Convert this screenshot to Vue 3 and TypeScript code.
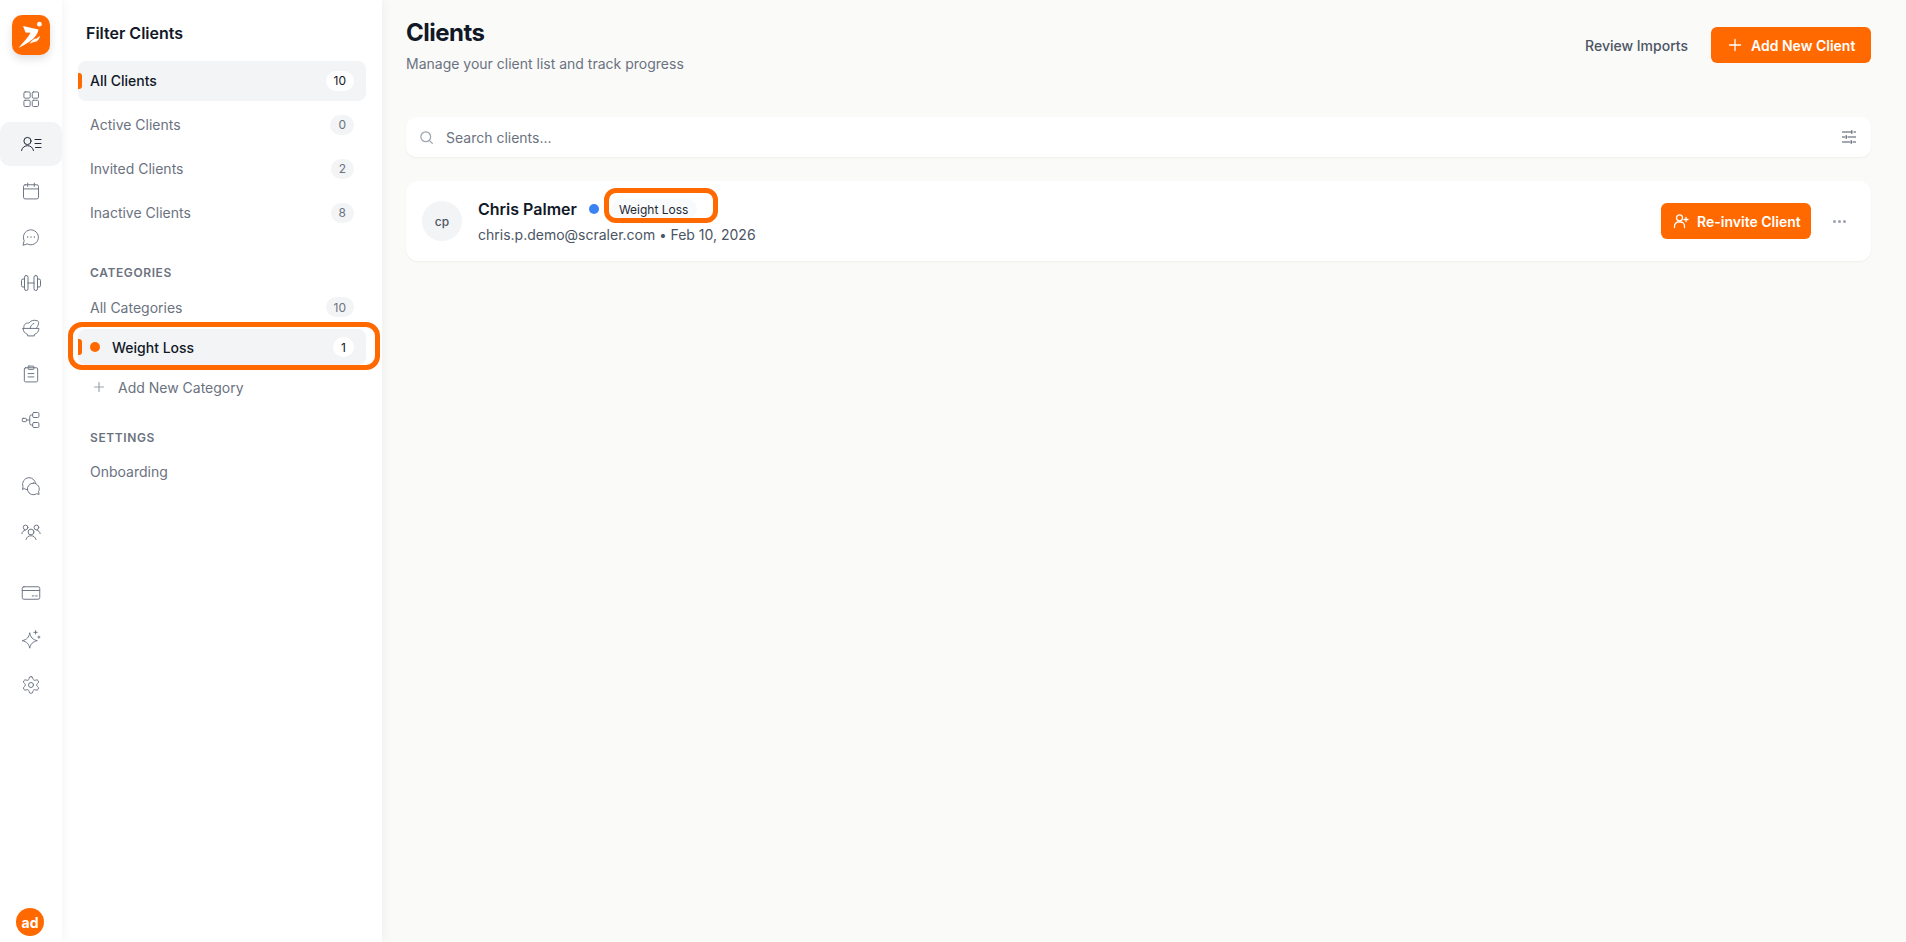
<script setup lang="ts">
interface Row { label: string; count: number; active?: boolean }
const primary: Row[] = [
  { label: 'All Clients', count: 10, active: true },
  { label: 'Active Clients', count: 0 },
  { label: 'Invited Clients', count: 2 },
  { label: 'Inactive Clients', count: 8 },
]
</script>

<template>
  <div class="app">
    <nav class="rail">
      <div class="logo">
        <svg viewBox="0 0 38 40" width="38" height="40">
          <circle cx="27.4" cy="9.2" r="2.4" fill="#fff" />
          <path d="M11 11 L26.500 14.500 C26 18.500 22.500 23.500 17 27 C14 29 10.500 31 6.500 33 C10 28.500 14 24.500 16.500 21 C17.500 19.500 18.300 18.500 18.500 17.800 L13.500 17.500 Z" fill="#fff" />
          <path d="M17.500 29 C19.500 25.500 22 23.600 24.500 23.600 C25.500 22.800 26.500 22 28 20.800 C27.400 24.500 25.200 26.800 22.500 27.100 C20.700 27.300 19 28 17.500 29 Z" fill="#fff" />
        </svg>
      </div>
      <div class="rail-items">
        <a class="ri"><svg viewBox="0 0 24 24"><rect x="3.500" y="3.500" width="7.500" height="7.500" rx="1.500"/><rect x="13.500" y="3.500" width="7.500" height="7.500" rx="1.500"/><rect x="3.500" y="13.500" width="7.500" height="7.500" rx="1.500"/><rect x="13.500" y="13.500" width="7.500" height="7.500" rx="1.500"/></svg></a>
        <a class="ri on"><svg class="w24" viewBox="0 0 24 24"><circle cx="8.500" cy="9" r="3.600"/><path d="M2.500 18.500c.7-3 3-4.800 6-4.800s5.300 1.800 6 4.800"/><path d="M16 7.500h6M16 11.500h6M16.500 15.500h5.500"/></svg></a>
        <a class="ri"><svg viewBox="0 0 24 24"><rect x="3" y="4.500" width="18" height="17" rx="2"/><path d="M3 9.500h18M8 2.500v4M16 2.500v4"/></svg></a>
        <a class="ri"><svg viewBox="0 0 24 24"><path d="M7.900 20.500A9 9 0 1 0 3.800 16.400L2.500 21.500Z"/><path d="M8 12h.01M12 12h.01M16 12h.01" stroke-width="1.700"/></svg></a>
        <a class="ri"><svg class="w24" viewBox="0 0 24 24"><path d="M9 12h6"/><rect x="5.500" y="4.500" width="3.500" height="15" rx="1.700"/><rect x="15" y="4.500" width="3.500" height="15" rx="1.700"/><path d="M5.500 8H4a1.500 1.500 0 0 0-1.500 1.500v5A1.500 1.500 0 0 0 4 16h1.500M18.500 8H20a1.500 1.500 0 0 1 1.500 1.500v5a1.500 1.500 0 0 1-1.500 1.500h-1.500"/></svg></a>
        <a class="ri"><svg viewBox="0 0 24 24"><path d="M2.500 12.500h19a9.500 8 0 0 1-5.500 7.300V21.500H8v-1.700a9.500 8 0 0 1-5.500-7.300z"/><path d="M3.500 12.500C2.500 8.500 5.500 5.500 9.500 6c2-3 6-3.800 8.500-3 3 0 3.500 2 3 4-.4 2-1.500 4-3 5.500"/><path d="M11 12.500c0-2.500 1.500-4.500 4.500-6"/></svg></a>
        <a class="ri"><svg viewBox="0 0 24 24"><rect x="4" y="4.500" width="16" height="17" rx="1.500"/><rect x="8.500" y="2.500" width="7" height="4" rx="1"/><path d="M8.500 11.500h7M8.500 15.500h7"/></svg></a>
        <a class="ri"><svg viewBox="0 0 24 24"><rect x="1.500" y="10" width="5" height="4" rx="1"/><rect x="14" y="3" width="7.500" height="6" rx="1.500"/><rect x="14" y="15" width="7.500" height="6" rx="1.500"/><path d="M6.500 12h4M14 6h-1.500a2 2 0 0 0-2 2v8a2 2 0 0 0 2 2H14"/></svg></a>
        <a class="ri gap-a"><svg viewBox="0 0 24 24"><path d="M8 16.500A8 8 0 0 1 3.700 15L1.800 16.300l.6-3.400A8 8 0 0 1 9.500 2a8 8 0 0 1 8 6.800"/><path d="M15 8.500a7 7 0 0 1 6 10.500l.8 3-3.200-.7A7 7 0 1 1 15 8.500z"/></svg></a>
        <a class="ri"><svg viewBox="0 0 24 24"><circle cx="12" cy="12" r="3.500"/><path d="M6 21c.6-2.800 3-4.500 6-4.500s5.400 1.700 6 4.500"/><circle cx="5.500" cy="6.500" r="2.800"/><circle cx="18.500" cy="6.500" r="2.800"/><path d="M1 14c.3-2.300 2-3.800 4-4M23 14c-.3-2.300-2-3.800-4-4"/></svg></a>
        <a class="ri gap-b"><svg viewBox="0 0 24 24"><rect x="1.500" y="4.500" width="21" height="15" rx="2"/><path d="M1.500 9h21M13.500 15.500h2M17.500 15.500h2"/></svg></a>
        <a class="ri"><svg viewBox="0 0 24 24"><path d="M10.500 5c1 5 3.500 7.800 9 9-5.500 1.200-8 4-9 9-1-5-3.500-7.800-9-9 5.500-1.200 8-4 9-9z"/><path d="M17.500 2v4M15.500 4h4M21.500 8.500v2.500M20.300 9.700h2.400"/></svg></a>
        <a class="ri"><svg viewBox="0 0 24 24"><circle cx="12" cy="12" r="3"/><path d="M12.220 2h-.44a2 2 0 0 0-2 2v.18a2 2 0 0 1-1 1.730l-.43.250a2 2 0 0 1-2 0l-.15-.08a2 2 0 0 0-2.730.730l-.22.380a2 2 0 0 0 .73 2.730l.15.100a2 2 0 0 1 1 1.720v.510a2 2 0 0 1-1 1.740l-.15.090a2 2 0 0 0-.73 2.730l.22.380a2 2 0 0 0 2.730.730l.15-.08a2 2 0 0 1 2 0l.43.250a2 2 0 0 1 1 1.730V20a2 2 0 0 0 2 2h.44a2 2 0 0 0 2-2v-.18a2 2 0 0 1 1-1.730l.43-.25a2 2 0 0 1 2 0l.15.080a2 2 0 0 0 2.730-.730l.22-.39a2 2 0 0 0-.73-2.730l-.15-.08a2 2 0 0 1-1-1.740v-.5a2 2 0 0 1 1-1.740l.15-.09a2 2 0 0 0 .73-2.730l-.22-.38a2 2 0 0 0-2.730-.73l-.15.080a2 2 0 0 1-2 0l-.43-.25a2 2 0 0 1-1-1.730V4a2 2 0 0 0-2-2z"/></svg></a>
      </div>
      <div class="avatar-sm">ad</div>
    </nav>

    <aside class="side">
      <h2 class="side-title">Filter Clients</h2>
      <ul class="list primary">
        <li v-for="r in primary" :key="r.label" class="row" :class="{ sel: r.active }">
          <span class="row-label">{{ r.label }}</span>
          <span class="count">{{ r.count }}</span>
        </li>
      </ul>

      <h3 class="section cat">CATEGORIES</h3>
      <ul class="list cats">
        <li class="row short"><span class="row-label">All Categories</span><span class="count">10</span></li>
        <li class="row short sel ringed">
          <i class="dot"></i><span class="row-label">Weight Loss</span><span class="count">1</span>
        </li>
        <li class="row short add">
          <svg class="plus" viewBox="0 0 16 16"><path d="M8 3.500v9M3.500 8h9" /></svg>
          <span class="row-label">Add New Category</span>
        </li>
      </ul>

      <h3 class="section set">SETTINGS</h3>
      <ul class="list">
        <li class="row short"><span class="row-label">Onboarding</span></li>
      </ul>
    </aside>

    <main class="main">
      <header class="head">
        <div>
          <h1>Clients</h1>
          <p>Manage your client list and track progress</p>
        </div>
        <div class="head-actions">
          <button class="link">Review Imports</button>
          <button class="btn add-btn">
            <svg viewBox="0 0 16 16" width="16" height="16"><path d="M8 2.500v11M2.500 8h11" /></svg>
            Add New Client
          </button>
        </div>
      </header>

      <div class="search">
        <svg class="s-ico" viewBox="0 0 16 16"><circle cx="7.200" cy="7.200" r="5.200"/><path d="M11 11l3.200 3.200"/></svg>
        <span class="placeholder">Search clients...</span>
        <svg class="s-filter" viewBox="0 0 16 16"><path d="M1 3h9M12.500 3H15M1 8h3M6.500 8H15M1 13h8M11.500 13H15M10.800 1.200v3.600M5.200 6.200v3.600M10.200 11.200v3.600"/></svg>
      </div>

      <section class="card">
        <div class="avatar">cp</div>
        <div class="info">
          <div class="name-line">
            <span class="name">Chris Palmer</span>
            <i class="status"></i>
            <span class="tag">Weight Loss</span>
          </div>
          <div class="meta">chris.p.demo@scraler.com <span class="sep">•</span> Feb 10, 2026</div>
        </div>
        <button class="btn invite">
          <svg viewBox="0 0 16 16" width="16" height="16"><circle cx="6.500" cy="4.800" r="3"/><path d="M1.500 14.500v-1.500a4 4 0 0 1 4-4h2a4 4 0 0 1 4 4v1.500M13 4.500v4M11 6.500h4"/></svg>
          Re-invite Client
        </button>
        <span class="more"><i></i><i></i><i></i></span>
      </section>
    </main>
  </div>
</template>

<style>
html, body { margin: 0; background: #fafaf9; }
</style>

<style scoped>
* { box-sizing: border-box; }
.app {
  display: flex;
  height: 942px;
  overflow: hidden;
  font-family: Inter, "Liberation Sans", sans-serif;
  background: #fafaf9;
  color: #111827;
}
.rail {
  width: 62px;
  flex: none;
  background: #fff;
  display: flex;
  flex-direction: column;
  align-items: center;
  padding-top: 15px;
  position: relative;
  z-index: 1;
  box-shadow: 0 0 12px rgba(0, 0, 0, .06);
}
.logo {
  width: 38px;
  height: 40px;
  border-radius: 10px;
  background: #ff6900;
  display: flex;
  align-items: center;
  justify-content: center;
  box-shadow: 0 4px 8px rgba(0, 0, 0, .12);
}
.rail-items {
  display: flex;
  flex-direction: column;
  width: 100%;
  margin-top: 21px;
}
.ri {
  height: 45.900px;
  width: 100%;
  flex: none;
  display: flex;
  align-items: center;
  justify-content: center;
  color: #6b7280;
}
.ri.on {
  height: 44px;
  margin: 0 0 1.900px;
  background: #f3f4f6;
  border-radius: 10px;
  color: #1f2937;
}
.ri svg {
  width: 20px;
  height: 20px;
  fill: none;
  stroke: currentColor;
  stroke-width: 1.150;
  stroke-linecap: round;
  stroke-linejoin: round;
}
.ri svg.w24 { width: 24px; height: 24px; stroke-width: 1; }
.gap-a { margin-top: 20px; }
.gap-b { margin-top: 15px; }
.avatar-sm {
  position: absolute;
  left: 16px;
  top: 908px;
  width: 28px;
  height: 28px;
  border-radius: 50%;
  background: #ff6900;
  color: #fff;
  font-size: 14px;
  font-weight: 700;
  display: flex;
  align-items: center;
  justify-content: center;
}
.side {
  width: 320px;
  flex: none;
  background: #fff;
  padding: 0 16px;
  box-shadow: 0 0 12px rgba(0, 0, 0, .06);
}
.side-title {
  margin: 0;
  padding: 23px 8px 0;
  font-size: 16px;
  line-height: 20px;
  font-weight: 600;
  color: #111827;
}
.list { list-style: none; margin: 0; padding: 0; }
.primary {
  margin-top: 17.500px;
  display: flex;
  flex-direction: column;
  gap: 4px;
}
.row {
  height: 40px;
  border-radius: 8px;
  display: flex;
  align-items: center;
  padding: 0 12px;
  position: relative;
  font-size: 14px;
  color: #6b7280;
}
.row-label { flex: 1; }
.row.sel {
  background: #f3f4f6;
  color: #111827;
  font-weight: 500;
}
.row.sel::before {
  content: "";
  position: absolute;
  left: 0;
  top: 12px;
  width: 4px;
  height: 16px;
  background: #ff6900;
  border-radius: 0 3px 3px 0;
}
.count {
  min-width: 20px;
  height: 20px;
  padding: 0 8px;
  border-radius: 10px;
  background: #f3f4f6;
  color: #6b7280;
  font-size: 12px;
  font-weight: 400;
  display: flex;
  align-items: center;
  justify-content: center;
}
.sel .count { background: #fff; color: #111827; }
.section {
  margin: 0;
  padding: 0 12px;
  font-size: 12px;
  line-height: 16px;
  letter-spacing: .6px;
  font-weight: 600;
  color: #6b7280;
}
.cat { margin-top: 32.500px; }
.set { margin-top: 24.500px; }
.cats { margin-top: 3px; display: flex; flex-direction: column; gap: 4px; }
.row.short { height: 36px; }
.row.short.sel::before { top: 10px; }
.ringed::after {
  content: "";
  position: absolute;
  left: -10px;
  right: -14px;
  top: -7px;
  bottom: -5px;
  border: 5px solid #ff6900;
  border-radius: 14px;
  pointer-events: none;
}
.dot {
  width: 10px;
  height: 10px;
  border-radius: 50%;
  background: #ff6900;
  margin-right: 12px;
}
.add { padding-left: 13px; }
.plus {
  width: 16px;
  height: 16px;
  margin-right: 11px;
  fill: none;
  stroke: #9ca3af;
  stroke-width: 1.200;
  stroke-linecap: round;
}
.list + .section { margin-bottom: 8px; }
.main {
  flex: 1;
  min-width: 0;
  padding: 0 35px 0 24px;
}
.head {
  display: flex;
  justify-content: space-between;
  align-items: flex-start;
  padding-top: 18px;
}
h1 {
  margin: 0;
  font-size: 24px;
  line-height: 30px;
  font-weight: 700;
  letter-spacing: -.5px;
  color: #111827;
}
.head p {
  margin: 6px 0 0;
  font-size: 14px;
  line-height: 20px;
  color: #6b7280;
}
.head-actions {
  display: flex;
  align-items: center;
  gap: 23px;
  margin-top: 9px;
}
button { font-family: inherit; border: 0; cursor: pointer; white-space: nowrap; }
.link {
  background: none;
  padding: 0;
  font-size: 14px;
  font-weight: 500;
  color: #4b5563;
}
.btn {
  background: #ff6900;
  color: #fff;
  font-size: 14px;
  font-weight: 600;
  height: 36px;
  border-radius: 6px;
  display: flex;
  align-items: center;
  gap: 8px;
}
.btn svg { flex: none; fill: none; stroke: #fff; stroke-width: 1.300; stroke-linecap: round; stroke-linejoin: round; }
.add-btn { width: 160px; padding: 0 16px; }
.search {
  margin-top: 43px;
  height: 40px;
  background: #fff;
  border-radius: 10px;
  box-shadow: 0 1px 2px rgba(0, 0, 0, .05);
  display: flex;
  align-items: center;
  padding: 0 14px 0 13px;
}
.s-ico { width: 15px; height: 15px; fill: none; stroke: #9ca3af; stroke-width: 1.300; stroke-linecap: round; }
.placeholder { flex: 1; margin-left: 12px; font-size: 14px; color: #6b7280; }
.s-filter { width: 16px; height: 16px; fill: none; stroke: #4b5563; stroke-width: 1.200; }
.card {
  margin-top: 24px;
  height: 80px;
  background: #fff;
  border-radius: 12px;
  box-shadow: 0 1px 2px rgba(0, 0, 0, .05);
  display: flex;
  align-items: center;
  padding: 0 16px;
}
.avatar {
  width: 40px;
  height: 40px;
  border-radius: 50%;
  background: #f3f4f6;
  color: #4b5563;
  font-size: 12px;
  font-weight: 500;
  display: flex;
  align-items: center;
  justify-content: center;
}
.info { flex: 1; margin-left: 16px; }
.name-line { display: flex; align-items: center; height: 24px; }
.name { font-size: 16px; font-weight: 600; color: #111827; }
.status { width: 10px; height: 10px; border-radius: 50%; background: #3b82f6; margin-left: 12px; }
.tag {
  margin-left: 12px;
  position: relative;
  height: 20px;
  width: 86px;
  padding-left: 8px;
  border-radius: 10px;
  background: #f9fafb;
  color: #1f2937;
  font-size: 12px;
  display: flex;
  align-items: center;
}
.tag::after {
  content: "";
  position: absolute;
  left: -7px;
  right: -21px;
  top: -11px;
  bottom: -4px;
  border: 5px solid #ff6900;
  border-radius: 12px;
}
.meta { margin-top: 4px; font-size: 14px; line-height: 20px; color: #4b5563; }
.sep { font-size: 13px; }
.invite { width: 150px; padding: 0 12px; }
.more {
  width: 28px;
  margin: 0 2px 0 14px;
  display: flex;
  justify-content: center;
  gap: 2px;
}
.more i { width: 3px; height: 3px; border-radius: 50%; background: #9ca3af; }
</style>
